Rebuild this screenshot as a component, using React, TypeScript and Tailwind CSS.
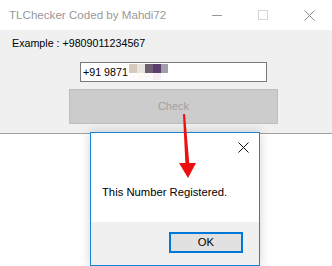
import React from "react";

export default function App() {
  return (
    <div className="relative w-[332px] h-[266px] overflow-hidden bg-white font-['Liberation_Sans',Arial,sans-serif]">
      {/* Main window */}
      <div className="flex flex-col w-[332px]">
        <div className="flex h-[30px] items-center justify-between bg-white">
          <div className="pl-[9px] text-[11.6px] text-[#999999]">TLChecker Coded by Mahdi72</div>
          <div className="flex h-[30px]">
            <div className="flex w-[46px] items-center justify-center">
              <div className="h-px w-[10px] bg-[#999999]" />
            </div>
            <div className="flex w-[46px] items-center justify-center">
              <div className="h-[10px] w-[10px] border border-[#d6d6d6]" />
            </div>
            <div className="flex w-[46px] items-center justify-center">
              <svg width="11" height="11" viewBox="0 0 11 11">
                <path d="M0.5 0.5 L10.5 10.5 M10.5 0.5 L0.5 10.5" stroke="#8a8a8a" strokeWidth="1" fill="none" />
              </svg>
            </div>
          </div>
        </div>
        <div className="h-[104px] bg-[#f0f0f0] border-b border-[#a0a0a0]">
          <div className="pl-[12px] pt-[7px] text-[10.7px] leading-[13px] text-black">Example : +9809011234567</div>
          <div className="ml-[80px] mt-[12px] flex h-[20px] w-[187px] items-center border border-[#7a7a7a] bg-white pl-[2px]">
            <span className="text-[10.7px] leading-[13px] text-black">+91 9871</span>
            <div className="ml-[1px] flex flex-col">
              <div className="flex h-[9px]">
                <div className="w-[8px] bg-[#d8cabb]" />
                <div className="w-[8px] bg-[#e8e4de]" />
                <div className="w-[8px] bg-[#6e5f70]" />
                <div className="w-[8px] bg-[#5b3e6f]" />
                <div className="w-[7px] bg-[#a0a0aa]" />
              </div>
              <div className="flex h-[7px]">
                <div className="w-[8px] bg-[#fefcfa]" />
                <div className="w-[8px] bg-[#fdf9f4]" />
                <div className="w-[8px] bg-[#fbf8fb]" />
                <div className="w-[8px] bg-[#f5eef5]" />
                <div className="w-[7px] bg-white" />
              </div>
            </div>
          </div>
          <div className="ml-[69px] mt-[7px] flex h-[35px] w-[209px] items-center justify-center border border-[#bfbfbf] bg-[#cccccc] text-[11px] text-[#a0a0a0]">
            Check
          </div>
        </div>
      </div>

      {/* Message box */}
      <div className="absolute left-[90px] top-[132px] flex h-[134px] w-[170px] flex-col border border-[#1883d7] bg-white shadow-[0_0_10px_rgba(0,0,0,0.18)]">
        <div className="flex h-[89px] flex-col bg-white">
          <div className="flex h-[30px] justify-end pr-[10px] pt-[9px]">
            <svg width="11" height="11" viewBox="0 0 11 11">
              <path d="M0.5 0.5 L10.5 10.5 M10.5 0.5 L0.5 10.5" stroke="#111111" strokeWidth="1" fill="none" />
            </svg>
          </div>
          <div className="mt-[22px] pl-[11px] text-[11.25px] leading-[14px] text-black">This Number Registered.</div>
        </div>
        <div className="h-[43px] bg-[#f0f0f0] pl-[78px] pt-[10px]">
          <div className="flex h-[21px] w-[74px] items-center justify-center border-2 border-[#0078d7] bg-[#e1e1e1] text-[11.25px] text-black">
            OK
          </div>
        </div>
      </div>

      {/* Red arrow annotation */}
      <svg className="pointer-events-none absolute left-0 top-0" width="332" height="266" viewBox="0 0 332 266">
        <polygon points="183,114 185,114 189.5,166 185.5,166" fill="#ec1010" />
        <polygon points="179,163 196,163 188,178" fill="#ec1010" />
      </svg>
    </div>
  );
}
